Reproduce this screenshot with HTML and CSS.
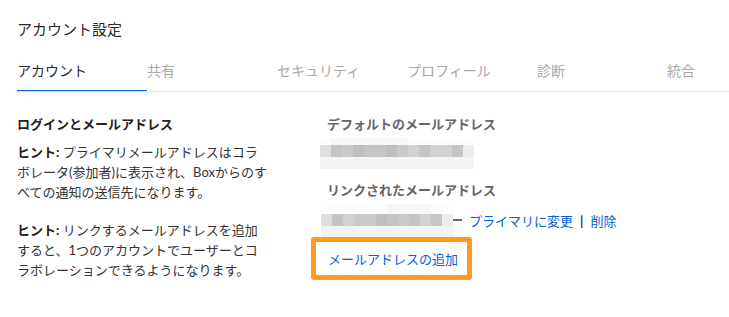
FILE: index.html
```html
<!DOCTYPE html>
<html lang="ja">
<head>
<meta charset="utf-8">
<link rel="stylesheet" href="styles.css">
</head>
<body>
<div class="page">
  <h1 class="title">アカウント設定</h1>
  <nav class="tabs">
    <div class="tab active">アカウント</div>
    <div class="tab">共有</div>
    <div class="tab">セキュリティ</div>
    <div class="tab">プロフィール</div>
    <div class="tab">診断</div>
    <div class="tab">統合</div>
  </nav>
  <div class="content">
    <div class="left">
      <h2 class="heading">ログインとメールアドレス</h2>
      <p class="hint"><b>ヒント:</b> プライマリメールアドレスはコラ<br>ボレータ(参加者)に表示され、Boxからのす<br>べての通知の送信先になります。</p>
      <p class="hint"><b>ヒント:</b> リンクするメールアドレスを追加<br>すると、1つのアカウントでユーザーとコ<br>ラボレーションできるようになります。</p>
    </div>
    <div class="right">
      <h3 class="label">デフォルトのメールアドレス</h3>
      <div class="blob blob1">
        <div class="faint top"><span class="f1 w77"></span></div>
        <div class="main">
          <span class="c1"></span><span class="c4"></span><span class="c3"></span><span class="c5"></span><span class="c4"></span><span class="c4"></span><span class="c5"></span><span class="c3"></span><span class="c2"></span><span class="c4"></span><span class="c2"></span><span class="c2"></span><span class="c4"></span><span class="c0"></span>
        </div>
        <div class="faint bot"></div>
      </div>
      <h3 class="label label2">リンクされたメールアドレス</h3>
      <div class="linked">
        <div class="blob blob2">
          <div class="faint top2"><span class="f1 w44"></span></div>
          <div class="main">
            <span class="c1"></span><span class="c4"></span><span class="c2"></span><span class="c3"></span><span class="c3"></span><span class="c5"></span><span class="c4"></span><span class="c3"></span><span class="c4"></span><span class="c2"></span><span class="c4"></span><span class="c0"></span>
          </div>
          <div class="faint bot2"></div>
        </div>
        <span class="dash"></span>
        <a class="link primary">プライマリに変更</a>
        <span class="sep">|</span>
        <a class="link">削除</a>
      </div>
      <div class="add-box">
        <a class="link">メールアドレスの追加</a>
      </div>
    </div>
  </div>
</div>
</body>
</html>
```
FILE: styles.css
```css
html, body {
  margin: 0;
  padding: 0;
  background: #fff;
}
body {
  font-family: Lato, "Noto Sans CJK JP", sans-serif;
  color: #222;
  font-size: 13px;
  line-height: 20px;
  overflow: hidden;
}
.page {
  padding-left: 17px;
  width: 712px;
}
.title {
  margin: 0;
  padding-top: 19px;
  font-size: 15px;
  font-weight: normal;
  line-height: 20px;
  color: #2a2a2a;
}
.tabs {
  display: flex;
  margin-top: 17px;
  overflow: hidden;
  border-bottom: 1px solid #e6e6e6;
  box-shadow: 0 1px 2px rgba(0, 0, 0, 0.03);
}
.tab {
  flex: 0 0 130px;
  font-size: 14px;
  line-height: 20px;
  padding-top: 5px;
  padding-bottom: 9px;
  color: #a8a8a8;
  margin-bottom: -1px;
  border-bottom: 2px solid transparent;
}
.tab.active {
  color: #2a2a2a;
  border-bottom-color: #0061d5;
}
.content {
  display: grid;
  grid-template-columns: 310px 1fr;
  padding-top: 22px;
}
.heading {
  margin: 0 0 8px;
  font-size: 13px;
  line-height: 20px;
  font-weight: bold;
  color: #222;
}
.hint {
  margin: 0 0 18px;
  color: #333;
  white-space: nowrap;
}
.hint b {
  color: #222;
}
.label {
  margin: 0;
  font-size: 13px;
  line-height: 20px;
  font-weight: bold;
  color: #666;
}
.label2 {
  margin-top: 11px;
}
.blob {
  margin-left: -7px;
  display: flex;
  flex-direction: column;
}
.blob1 {
  margin-top: 5px;
  width: 154px;
}
.blob2 {
  width: 132px;
  margin-left: -6px;
}
.faint {
  display: flex;
  background: #fbfbfb;
}
.top {
  height: 6px;
  background: #fdfdfd;
}
.top2 {
  height: 10px;
  background: #fdfdfd;
}
.faint span.f1 {
  background: #f6f6f6;
}
.w77 {
  width: 77px;
  margin-left: 11px;
}
.w44 {
  width: 44px;
  margin-left: 66px;
}
.bot {
  height: 12px;
  background: #f4f4f4;
}
.bot2 {
  height: 11px;
  background: #f4f4f4;
}
.main {
  display: flex;
  height: 12px;
}
.main span {
  flex: 0 0 11px;
  height: 12px;
}
.c0 { background: #ececec; }
.c1 { background: #dedede; }
.c2 { background: #d2d2d2; }
.c3 { background: #cacaca; }
.c4 { background: #c5c5c5; }
.c5 { background: #bfbfbf; }
.linked {
  display: flex;
  align-items: center;
  margin-top: 4px;
}
.dash {
  width: 9px;
  height: 2px;
  background: #666;
  margin-top: -1px;
}
.link {
  color: #0061d5;
  text-decoration: none;
  font-size: 13px;
  line-height: 20px;
}
.primary {
  margin-left: 7px;
}
.sep {
  margin: 0 7px;
  color: #333;
  font-weight: bold;
}
.add-box {
  box-sizing: border-box;
  margin-left: -16px;
  width: 161px;
  height: 43px;
  border: 5px solid #ff9a1e;
  border-radius: 3px;
  padding-left: 12px;
  display: flex;
  align-items: center;
}
```
